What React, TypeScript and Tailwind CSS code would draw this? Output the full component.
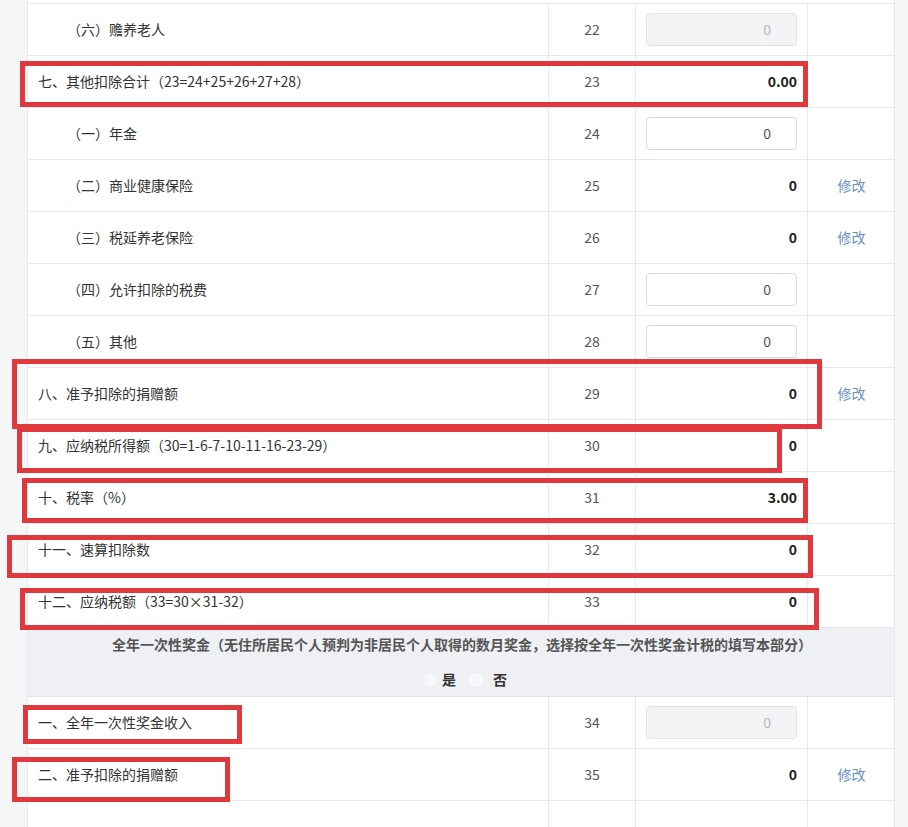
import React from "react";

type Row = {
  label: string;
  num: number;
  indent?: boolean;
  kind: "input" | "disabled" | "value";
  value?: string;
  edit?: boolean;
};

const rowsTop: Row[] = [
  { label: "（六）赡养老人", num: 22, indent: true, kind: "disabled" },
  { label: "七、其他扣除合计（23=24+25+26+27+28）", num: 23, kind: "value", value: "0.00" },
  { label: "（一）年金", num: 24, indent: true, kind: "input" },
  { label: "（二）商业健康保险", num: 25, indent: true, kind: "value", value: "0", edit: true },
  { label: "（三）税延养老保险", num: 26, indent: true, kind: "value", value: "0", edit: true },
  { label: "（四）允许扣除的税费", num: 27, indent: true, kind: "input" },
  { label: "（五）其他", num: 28, indent: true, kind: "input" },
  { label: "八、准予扣除的捐赠额", num: 29, kind: "value", value: "0", edit: true },
  { label: "九、应纳税所得额（30=1-6-7-10-11-16-23-29）", num: 30, kind: "value", value: "0" },
  { label: "十、税率（%）", num: 31, kind: "value", value: "3.00" },
  { label: "十一、速算扣除数", num: 32, kind: "value", value: "0" },
  { label: "十二、应纳税额（33=30×31-32）", num: 33, kind: "value", value: "0" },
];

const rowsBottom: Row[] = [
  { label: "一、全年一次性奖金收入", num: 34, kind: "disabled" },
  { label: "二、准予扣除的捐赠额", num: 35, kind: "value", value: "0", edit: true },
];

// red annotation boxes drawn over the table: [left, top, width, height]
const marks: [number, number, number, number][] = [
  [20, 61, 788, 46],
  [12, 359, 810, 70],
  [17, 427, 765, 46],
  [22, 478, 786, 45],
  [7, 535, 806, 43],
  [20, 588, 799, 42],
  [23, 705, 219, 39],
  [12, 757, 218, 45],
];

function FormRow({ row }: { row: Row }) {
  return (
    <div className="grid grid-cols-[520px_87px_173px_87px] h-[52px] border-b border-[#e6e8eb]">
      <div className={`flex items-center text-[14px] text-[#333] ${row.indent ? "pl-[39px]" : "pl-[10px]"}`}>
        {row.label}
      </div>
      <div className="flex items-center justify-center border-l border-[#e6e8eb] text-[14px] text-[#555]">
        {row.num}
      </div>
      <div className="flex items-center pl-[10px] pr-[10px] border-l border-r border-[#e6e8eb]">
        {row.kind === "value" && (
          <div className="w-full text-right text-[14px] font-bold text-[#222]">{row.value}</div>
        )}
        {row.kind === "input" && (
          <div className="w-[152px] h-[33px] rounded border border-[#d7dae0] bg-white flex items-center justify-end pr-[25px] text-[14px] text-[#555]">
            0
          </div>
        )}
        {row.kind === "disabled" && (
          <div className="w-[152px] h-[33px] rounded border border-[#e2e4e8] bg-[#f2f3f5] flex items-center justify-end pr-[25px] text-[14px] text-[#b5b8bd]">
            0
          </div>
        )}
      </div>
      <div className="flex items-center justify-center text-[14px] text-[#6a8fbd]">
        {row.edit ? "修改" : ""}
      </div>
    </div>
  );
}

export default function App() {
  return (
    <div
      className="relative w-[908px] h-[827px] overflow-hidden bg-[#f5f6f8]"
      style={{ fontFamily: '"Noto Sans CJK SC", "Noto Sans", sans-serif' }}
    >
      <div className="ml-[27px] w-[868px] bg-white border-l border-r border-[#e6e8eb]">
        <div className="h-[4px] border-b border-[#e6e8eb]" />
        {rowsTop.map((r) => (
          <FormRow key={r.num} row={r} />
        ))}
        <div className="h-[69px] bg-[#eef0f3] border-b border-[#e2e4e8] flex flex-col items-center pt-[6px]">
          <div className="text-[14px] font-bold text-[#555] ml-[2px]">
            全年一次性奖金（无住所居民个人预判为非居民个人取得的数月奖金，选择按全年一次性奖金计税的填写本部分）
          </div>
          <div className="flex items-center mt-[14px] ml-[8px] text-[14px] font-bold text-[#333]">
            <span className="w-[14px] h-[14px] rounded-full bg-[#f7f8fa] mr-[5px]" />
            <span>是</span>
            <span className="w-[14px] h-[14px] rounded-full bg-[#f7f8fa] ml-[13px] mr-[10px]" />
            <span>否</span>
          </div>
        </div>
        {rowsBottom.map((r) => (
          <FormRow key={r.num} row={r} />
        ))}
        <div className="grid grid-cols-[520px_87px_173px_87px] h-[40px]">
          <div />
          <div className="border-l border-[#e6e8eb]" />
          <div className="border-l border-r border-[#e6e8eb]" />
          <div />
        </div>
      </div>
      {marks.map(([l, t, w, h], i) => (
        <div
          key={i}
          className="absolute border-[5px] border-[#e0383d] pointer-events-none"
          style={{ left: l, top: t, width: w, height: h }}
        />
      ))}
    </div>
  );
}
